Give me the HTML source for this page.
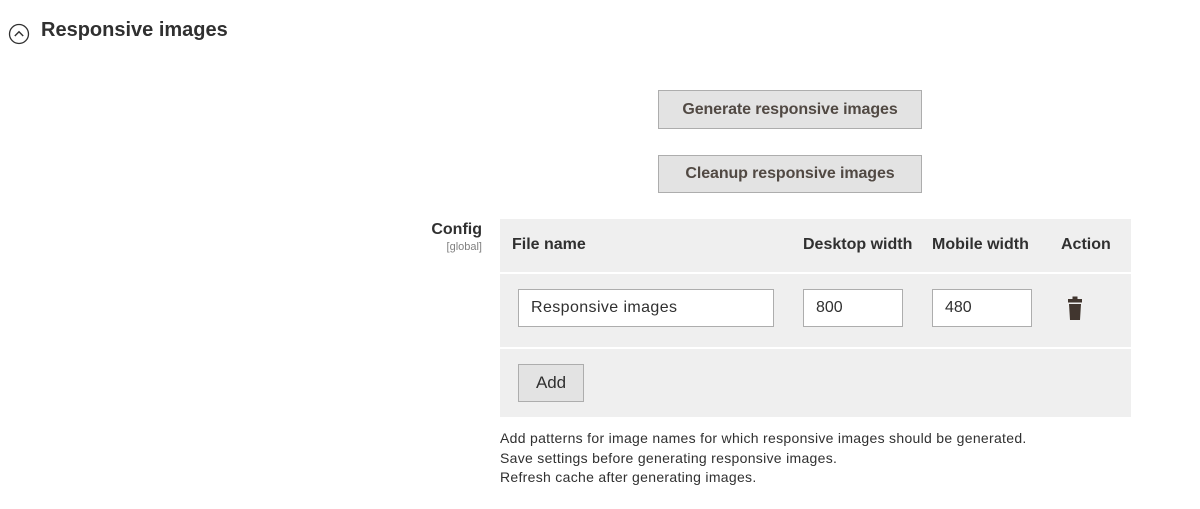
<!DOCTYPE html>
<html><head><meta charset="utf-8"><style>
*{box-sizing:border-box;margin:0;padding:0}
body{width:1200px;height:509px;background:#fff;font-family:"Liberation Sans",sans-serif;color:#303030;position:relative;overflow:hidden}
.a{position:absolute}
.btn{position:absolute;background:#e3e3e3;border:1px solid #adadad;color:#514943;font-size:16px;font-weight:bold;display:flex;align-items:center;justify-content:center;letter-spacing:-0.1px}
.inp{position:absolute;background:#fff;border:1px solid #adadad;font-size:16px;color:#303030;padding-left:12px;display:flex;align-items:center}
.th{position:absolute;font-size:16px;font-weight:bold;color:#303030;top:236px}
</style></head><body>
<svg class="a" style="left:8px;top:23px" width="22" height="22" viewBox="0 0 22 22"><circle cx="11" cy="11" r="9.5" fill="none" stroke="#303030" stroke-width="1.3"/><path d="M6.8 13 L11 8.8 L15.2 13" fill="none" stroke="#303030" stroke-width="1.4"/></svg>
<div class="a" style="left:41px;top:19px;font-size:20px;font-weight:bold;color:#303030">Responsive images</div>

<div class="btn" style="left:658px;top:90px;width:264px;height:39px">Generate responsive images</div>
<div class="btn" style="left:658px;top:155px;width:264px;height:38px">Cleanup responsive images</div>

<div class="a" style="left:420px;top:221px;width:62px;text-align:right;font-size:16px;font-weight:bold">Config</div>
<div class="a" style="left:420px;top:241px;width:62px;text-align:right;font-size:11px;color:#808080">[global]</div>

<div class="a" style="left:500px;top:219px;width:631px;height:53px;background:#efefef"></div>
<div class="a" style="left:500px;top:274px;width:631px;height:73px;background:#efefef"></div>
<div class="a" style="left:500px;top:349px;width:631px;height:68px;background:#efefef"></div>

<div class="th" style="left:512px">File name</div>
<div class="th" style="left:803px">Desktop width</div>
<div class="th" style="left:932px">Mobile width</div>
<div class="th" style="left:1061px">Action</div>

<div class="inp" style="left:518px;top:289px;width:256px;height:38px;letter-spacing:0.4px">Responsive images</div>
<div class="inp" style="left:803px;top:289px;width:100px;height:38px">800</div>
<div class="inp" style="left:932px;top:289px;width:100px;height:38px">480</div>
<svg class="a" style="left:1067px;top:296px" width="16" height="25" viewBox="0 0 16 25"><rect x="5.5" y="0.5" width="5" height="3" fill="#41362f"/><rect x="1" y="3" width="14" height="3.5" fill="#41362f"/><path d="M2 8 H14 L13 24 H3 Z" fill="#41362f"/></svg>

<div class="btn" style="left:518px;top:364px;width:66px;height:38px;font-weight:normal;font-size:17px;color:#303030">Add</div>

<div class="a" style="left:500px;top:429px;font-size:14px;letter-spacing:0.3px;line-height:19.5px;color:#303030;white-space:nowrap">Add patterns for image names for which responsive images should be generated.<br>Save settings before generating responsive images.<br>Refresh cache after generating images.</div>
</body></html>
